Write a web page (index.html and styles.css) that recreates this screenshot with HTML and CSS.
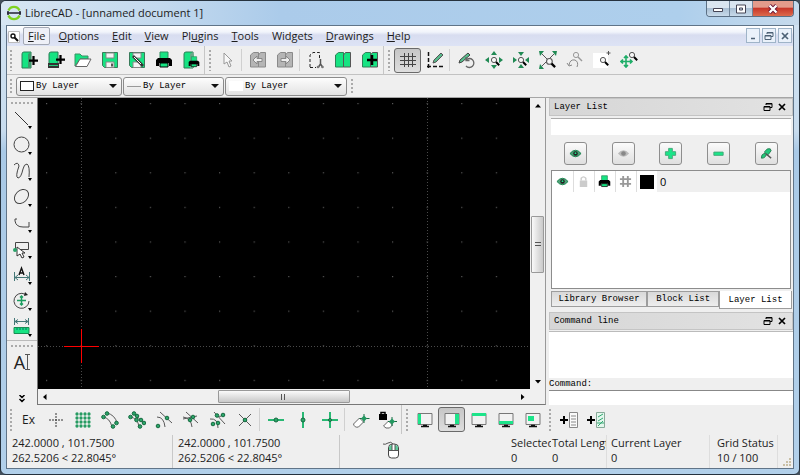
FILE: index.html
```html
<!DOCTYPE html>
<html lang="en">
<head>
<meta charset="utf-8">
<title>LibreCAD - [unnamed document 1]</title>
<link rel="stylesheet" href="styles.css">
</head>
<body>
<svg class="defs" aria-hidden="true">
  <defs>
    <symbol id="plus" viewBox="0 0 8 8"><path d="M3 0h2v3h3v2H5v3H3V5H0V3h3z" fill="#000"/></symbol>
    <symbol id="lens" viewBox="0 0 10 10"><circle cx="4" cy="4" r="2.6" fill="#f6f6f6" stroke="#555"/><path d="M6 6l3.2 3.2" stroke="#000" stroke-width="2"/></symbol>
    <symbol id="printer" viewBox="0 0 18 18"><path d="M5 1h8v7H5z" fill="#16e382" stroke="#2a8f5c"/><path d="M3 7h12l2 2v6h-3v-3H4v3H1V9z" fill="#000"/><path d="M5 12h8v4H5z" fill="#16e382" stroke="#000"/></symbol>
    <symbol id="eye" viewBox="0 0 14 10"><path d="M1 5q6-7 12 0q-6 7-12 0z" fill="currentColor" opacity=".75"/><path d="M1 5q6-7 12 0q-6 7-12 0z" fill="none" stroke="currentColor"/><circle cx="7" cy="5" r="2.4" fill="#222"/><circle cx="7" cy="4.600" r="1" fill="#19e488"/></symbol>
    <symbol id="monitor" viewBox="0 0 18 18"><path d="M2 2.500h14v11H2z" fill="#f2f2f2" stroke="#777"/><path d="M5 15.500h8M7 14.500h4" stroke="#111" stroke-width="1.500"/></symbol>
    <symbol id="restore" viewBox="0 0 10 10"><path d="M3 3V1.500h6v4H7M3 2h6M1 4.500h6v4H1zM1 5h6" fill="none" stroke="currentColor"/></symbol>
    <symbol id="cross" viewBox="0 0 10 10"><path d="M2 2l6 6M8 2l-6 6" fill="none" stroke="currentColor" stroke-width="1.700"/></symbol>
    <symbol id="more" viewBox="0 0 4 3"><path d="M0 0h4L2 3z"/></symbol>
  </defs>
</svg>

<div class="window">
  <header class="titlebar">
    <svg class="logo" viewBox="0 0 16 16"><path d="M2.500 5.500a6 6 0 0 1 11 0M2.500 10.500a6 6 0 0 0 11 0" fill="none" stroke="#7ed321" stroke-width="2.400"/><path d="M1 8h14M2 6v4M14 6v4" fill="none" stroke="#223" stroke-width="1.500"/></svg>
    <h1>LibreCAD - [unnamed document 1]</h1>
    <div class="winbuttons">
      <button aria-label="Minimize"><svg width="12" height="8" viewBox="0 0 12 8"><path d="M1.500 3.500h9v3h-9z" fill="#fff" stroke="#445"/></svg></button>
      <button aria-label="Maximize"><svg width="12" height="10" viewBox="0 0 12 10"><path d="M1.500 1h9v8h-9z" fill="#fff" stroke="#445"/><path d="M4.500 4h3v2h-3z" fill="#cde" stroke="#445"/></svg></button>
      <button class="close" aria-label="Close"><svg width="12" height="10" viewBox="0 0 12 10"><path d="M2.500 1.500l7 7M9.500 1.500l-7 7" stroke="#613" stroke-width="4"/><path d="M2.500 1.500l7 7M9.500 1.500l-7 7" stroke="#fff" stroke-width="2.400"/></svg></button>
    </div>
  </header>

  <div class="client">
    <nav class="menubar">
      <svg class="docicon" viewBox="0 0 12 12"><path d="M.5.5h11v11H.5z" fill="#fff" stroke="#bbb"/><circle cx="5" cy="5" r="2" fill="#fff" stroke="#111" stroke-width="1.400"/><path d="M6.500 6.500l3.500 3.500" stroke="#111" stroke-width="2"/></svg>
      <button class="active"><u>F</u>ile</button>
      <button><u>O</u>ptions</button>
      <button><u>E</u>dit</button>
      <button><u>V</u>iew</button>
      <button>Pl<u>u</u>gins</button>
      <button><u>T</u>ools</button>
      <button>Widgets</button>
      <button><u>D</u>rawings</button>
      <button><u>H</u>elp</button>
      <div class="mdi">
        <button aria-label="Minimize document"><svg viewBox="0 0 10 10"><path d="M3 7.500h4" stroke="currentColor" stroke-width="1.500"/></svg></button>
        <button aria-label="Restore document"><svg><use href="#restore"/></svg></button>
        <button aria-label="Close document"><svg><use href="#cross"/></svg></button>
      </div>
    </nav>

    <div class="toolbar">
      <i class="grip"></i>
      <button aria-label="New"><svg viewBox="0 0 18 18"><path d="M2 17V3q0-2 2-2h7v16z" fill="#16e382" stroke="#2a7d55"/><path d="M11 17H8V3l3-2" fill="#3d9b6c"/><use href="#plus" x="9" y="5" width="9" height="9"/></svg></button>
      <button aria-label="New from template"><svg viewBox="0 0 18 18"><path d="M2 13V3q0-2 2-2h7v12z" fill="#16e382" stroke="#2a7d55"/><path d="M1 12h11v5H1z" fill="#333"/><path d="M2 14.500h9" stroke="#24c979"/><use href="#plus" x="9" y="4" width="9" height="9"/></svg></button>
      <button aria-label="Open"><svg viewBox="0 0 18 18"><path d="M1 15V3h5l2 2h6v3H6z" fill="#16e382" stroke="#3a9164"/><path d="M1.500 15.500L6 8h11l-4 7.500z" fill="#fff" stroke="#666"/></svg></button>
      <button aria-label="Save"><svg viewBox="0 0 18 18"><path d="M1.500 1.500h15v15h-13l-2-2z" fill="#16e382" stroke="#3a7a5a"/><path d="M5 2h8v5H5zM5 11h8v5.500H5z" fill="#f4f4f4" stroke="#888"/><path d="M10 12.500h2v3h-2z" fill="#555"/></svg></button>
      <button aria-label="Save as"><svg viewBox="0 0 18 18"><path d="M1.500 1.500h15v15h-13l-2-2z" fill="#16e382" stroke="#3a7a5a"/><path d="M5 2h8v5H5zM5 11h8v5.500H5z" fill="#f4f4f4" stroke="#888"/><path d="M5 5l10 10" stroke="#333" stroke-width="2.600"/><path d="M6 6l7 7" stroke="#fff"/></svg></button>
      <button aria-label="Print"><svg><use href="#printer"/></svg></button>
      <button aria-label="Print preview"><svg viewBox="0 0 18 18"><path d="M2 17V3q0-2 2-2h7v16z" fill="#16e382" stroke="#2a7d55"/><path d="M8 3l3-2 1 4v12H8z" fill="#68a989"/><use href="#printer" x="6" y="5" width="12" height="12"/></svg></button>
      <i class="sep"></i><i class="grip tight"></i>
      <button aria-label="Select"><svg viewBox="0 0 18 18"><path d="M6 2v11l3-2 2 5 2-1-2-5h3z" fill="#f8f8f8" stroke="#999"/></svg></button>
      <i class="rule"></i>
      <button aria-label="Undo"><svg viewBox="0 0 18 18"><path d="M1.500 16V4l3-2.500h5V16zM9.500 4l2-2.500h5V16h-7z" fill="#b5b5b5" stroke="#8a8a8a"/><path d="M4 9l4-4v2.500h5v3H8V13z" fill="#eee" stroke="#888"/></svg></button>
      <button aria-label="Redo"><svg viewBox="0 0 18 18"><path d="M1.500 16V4l3-2.500h5V16zM9.500 4l2-2.500h5V16h-7z" fill="#b5b5b5" stroke="#8a8a8a"/><path d="M14 9l-4-4v2.500H5v3h5V13z" fill="#eee" stroke="#888"/></svg></button>
      <i class="rule"></i>
      <button aria-label="Cut"><svg viewBox="0 0 18 18"><path d="M3 16V4l3-2.500h6.500V8M3 16.500h6" fill="none" stroke="#222" stroke-dasharray="3 2"/><path d="M13.500 8v5l-2 3M13.500 13l2 3" fill="none" stroke="#555" stroke-width="1.500"/><circle cx="11" cy="16" r="1.300" fill="#777"/><circle cx="15.500" cy="16" r="1.300" fill="#777"/></svg></button>
      <button aria-label="Copy"><svg viewBox="0 0 18 18"><path d="M1.500 16V4l3-2.500h5V16z" fill="#16e382" stroke="#2f8158"/><path d="M9.500 16V4l2-2.500h5V16z" fill="#16e382" stroke="#555"/></svg></button>
      <button aria-label="Paste"><svg viewBox="0 0 18 18"><path d="M1.500 16V4l3-2.500h5V16z" fill="#16e382" stroke="#2f8158"/><path d="M9.500 16V4l2-2.500h5V16z" fill="#16e382" stroke="#555"/><use href="#plus" x="6" y="4" width="10" height="10"/></svg></button>
      <i class="sep"></i><i class="grip wide"></i>
      <button class="pressed" aria-label="Grid"><svg viewBox="0 0 18 18"><path d="M5.500 2v14M9.500 2v14M13.500 2v14M1 5.500h16M1 9.500h16M1 13.500h16" stroke="#444"/></svg></button>
      <button aria-label="Draft"><svg viewBox="0 0 18 18"><path d="M2.500 1v16M1 15.500h16" stroke="#111" stroke-width="1.500" stroke-dasharray="4 2"/><path d="M7 12l1-3 7-7 2 2-7 7z" fill="#58b98a" stroke="#555"/></svg></button>
      <i class="rule wide"></i>
      <button aria-label="Redraw"><svg viewBox="0 0 18 18"><path d="M1 12l1-3 8-7 2 2-8 7z" fill="#58c08e" stroke="#444"/><path d="M8 9a4.500 4.500 0 1 1 0 6M8 6v3.500h3.500" fill="none" stroke="#666" stroke-width="1.300"/></svg></button>
      <button aria-label="Zoom in"><svg viewBox="0 0 18 18"><path d="M9 0l3 4H6zM9 18l3-4H6zM0 9l4-3v6zM18 9l-4-3v6z" fill="#218a54"/><use href="#lens" x="5" y="5" width="10" height="10"/></svg></button>
      <button aria-label="Zoom out"><svg viewBox="0 0 18 18"><path d="M9 5l3-4H6zM9 13l3 4H6zM5 9L1 6v6zM13 9l4-3v6z" fill="#218a54"/><use href="#lens" x="5" y="5" width="10" height="10"/></svg></button>
      <button aria-label="Auto zoom"><svg viewBox="0 0 18 18"><path d="M3 3l12 12M15 3L3 15" stroke="#555"/><path d="M0 0h5L1 5zM18 0h-5l4 5zM0 18h5l-4-5z" fill="#218a54"/><use href="#lens" x="6" y="6" width="11" height="11"/></svg></button>
      <button aria-label="Previous view"><svg viewBox="0 0 18 18"><circle cx="10" cy="4" r="2.600" fill="#eee" stroke="#999"/><path d="M12 6l4 4" stroke="#999" stroke-width="1.500"/><path d="M3 14q1-6 6-5q4 2 2 7M1 12l2 3 3-1" fill="none" stroke="#888"/></svg></button>
      <button aria-label="Window zoom"><svg viewBox="0 0 18 18"><path d="M0 2h15v15H0z" fill="#fff"/><use href="#lens" x="6" y="5" width="10" height="10"/><path d="M15.500 0v4M13.500 2h4" stroke="#555"/></svg></button>
      <button aria-label="Zoom pan"><svg viewBox="0 0 18 18"><path d="M6 5v11M1 10.500h11M4 7l2-2 2 2M4 14l2 2 2-2M3 8.500l-2 2 2 2M10 8.500l2 2-2 2" fill="none" stroke="#1fae68" stroke-width="1.600"/><use href="#lens" x="8" y="0" width="10" height="10"/></svg></button>
    </div>

    <div class="toolbar pens">
      <i class="grip"></i>
      <label class="combo pen-color"><i class="swatch"></i><select aria-label="Color"><option>By Layer</option></select></label>
      <label class="combo pen-width"><i class="swatch line"></i><select aria-label="Line width"><option>By Layer</option></select></label>
      <label class="combo pen-type"><i class="swatch blank"></i><select aria-label="Line type"><option>By Layer</option></select></label>
      <i class="grip tight"></i>
    </div>

    <main class="work">
      <aside class="tools">
        <i class="grip-h"></i>
        <button aria-label="Line"><svg viewBox="0 0 20 20"><path d="M3 3l13 13" stroke="#333"/><use href="#more" x="16" y="17" width="4" height="3"/></svg></button>
        <button aria-label="Circle"><svg viewBox="0 0 20 20"><circle cx="9.500" cy="9.500" r="7.500" fill="none" stroke="#444"/><use href="#more" x="16" y="17" width="4" height="3"/></svg></button>
        <button aria-label="Curve"><svg viewBox="0 0 20 20"><path d="M2 4q4-4 5 1q-4 11-1 12q3 0 5-9q1-5 4-5q3 2 2 13" fill="none" stroke="#444"/><use href="#more" x="16" y="17" width="4" height="3"/></svg></button>
        <button aria-label="Ellipse"><svg viewBox="0 0 20 20"><ellipse cx="9.500" cy="9.500" rx="8" ry="6" transform="rotate(-45 9.500 9.500)" fill="none" stroke="#444"/><use href="#more" x="16" y="17" width="4" height="3"/></svg></button>
        <button aria-label="Polyline"><svg viewBox="0 0 20 20"><path d="M5 6q-3-1-2 2q1 6 8 6h6V9" fill="none" stroke="#444"/><use href="#more" x="16" y="17" width="4" height="3"/></svg></button>
        <button aria-label="Select"><svg viewBox="0 0 20 20"><path d="M3.500 3.500h13v7h-13z" fill="none" stroke="#444"/><path d="M5 8v9l3-2 2 4 2-1-2-4h3z" fill="#fff" stroke="#333"/><circle cx="3" cy="11" r="2" fill="#2aa36a"/><use href="#more" x="16" y="17" width="4" height="3"/></svg></button>
        <button aria-label="Dimension"><svg viewBox="0 0 20 20"><path d="M2.500 7v9M17.500 7v9M3 12.500h14M6 10l-3 2.500L6 15M14 10l3 2.500-3 2.500" fill="none" stroke="#477"/><path d="M7 10l2.500-7L12 10M8 8h3" fill="none" stroke="#111" stroke-width="1.400"/><use href="#more" x="16" y="17" width="4" height="3"/></svg></button>
        <button aria-label="Modify"><svg viewBox="0 0 20 20"><path d="M17 10a7.500 7.500 0 1 1-4-6.800" fill="none" stroke="#444"/><path d="M13 1l3 3-4 1z" fill="#222"/><path d="M9.500 5v9M5 9.500h9M8 6.500l1.500-1.500L11 6.500M8 12.500L9.500 14l1.500-1.500" fill="none" stroke="#1c9d60" stroke-width="1.500"/><use href="#more" x="16" y="17" width="4" height="3"/></svg></button>
        <button aria-label="Measure"><svg viewBox="0 0 20 20"><path d="M2.500 1v7M16.500 1v7M3 4.500h13M6 2.500l-3 2 3 2M13 2.500l3 2-3 2" fill="none" stroke="#477"/><path d="M2 10.500h15v6H2z" fill="#16e382" stroke="#188d53"/><path d="M5 11v2M8 11v2M11 11v2M14 11v2" stroke="#166"/><use href="#more" x="16" y="17" width="4" height="3"/></svg></button>
        <i class="split"></i>
        <i class="grip-h"></i>
        <button class="text-tool" aria-label="Text">A<svg viewBox="0 0 5 16"><path d="M0 .5h5M2.500 1v14M0 15.500h5" stroke="#555"/></svg></button>
        <button class="chevron" aria-label="More tools"><svg viewBox="0 0 8 8"><path d="M1.500 0L4 2.500 6.500 0M1.500 4L4 6.500 6.500 4" fill="none" stroke="#000" stroke-width="1.500"/></svg></button>
      </aside>

      <section class="drawing">
        <svg class="canvas" role="img" aria-label="Drawing area">
          <defs><pattern id="dots" x="8" y="5" width="34.600" height="34.600" patternUnits="userSpaceOnUse"><rect width="1.200" height="1.200" fill="#585858"/></pattern></defs>
          <rect width="100%" height="100%" fill="#000"/>
          <rect width="100%" height="100%" fill="url(#dots)"/>
          <path d="M43.500 0v2000M389.500 0v2000M0 248.500h3000" stroke="#4a4a4a" stroke-dasharray="1 2"/>
          <path d="M43 231h1v34h-1zM26 248h35v1H26z" fill="#ff0000"/>
        </svg>
        <div class="vscroll">
          <svg viewBox="0 0 6 4"><path d="M0 3.500L3 0l3 3.500z"/></svg>
          <i class="thumb"><b></b></i>
          <svg viewBox="0 0 6 4"><path d="M0 0h6L3 3.500z"/></svg>
        </div>
        <div class="hscroll">
          <svg viewBox="0 0 4 6"><path d="M3.500 0v6L0 3z"/></svg>
          <i class="thumb"><b></b></i>
          <svg viewBox="0 0 4 6"><path d="M0 0v6l3.500-3z"/></svg>
        </div>
        <i class="scroll-corner"></i>
      </section>

      <aside class="docks">
        <section class="layers">
          <header class="dockhead"><h2>Layer List</h2><button aria-label="Float layer list"><svg><use href="#restore"/></svg></button><button aria-label="Close layer list"><svg><use href="#cross"/></svg></button></header>
          <input class="filter" type="text" aria-label="Filter layers">
          <div class="layerbuttons">
            <button class="on" aria-label="Show all"><svg viewBox="0 0 14 14"><use href="#eye" y="2" width="14" height="10"/></svg></button>
            <button class="off" aria-label="Hide all"><svg viewBox="0 0 14 14"><path d="M1 7q6-7 12 0q-6 7-12 0z" fill="#bbb"/><circle cx="7" cy="7" r="2.500" fill="#888"/></svg></button>
            <button aria-label="Add layer"><svg viewBox="0 0 14 14"><path d="M5 1.500h4V5h3.500v4H9v3.500H5V9H1.500V5H5z" fill="#1be589" stroke="#43a877"/></svg></button>
            <button aria-label="Remove layer"><svg viewBox="0 0 14 14"><path d="M2 5.500h10v3.500H2z" fill="#1be589" stroke="#43a877"/></svg></button>
            <button aria-label="Edit layer"><svg viewBox="0 0 14 14"><path d="M1.500 12q0-5 4-5l-.5-2 3-3h3l1 2-3 4-3 1q0 3-4.500 3z" fill="#22c97b" stroke="#287a53"/><path d="M6 7l6 5" stroke="#555" stroke-width="1.500"/></svg></button>
          </div>
          <div class="layerlist">
            <table><tr>
              <td class="on"><svg viewBox="0 0 14 14"><use href="#eye" y="2" width="14" height="10"/></svg></td>
              <td><svg viewBox="0 0 14 14"><path d="M3 6h8v7H3z" fill="#ccc"/><path d="M4.500 6V3.500q2.500-3 5 0V6" fill="none" stroke="#ccc" stroke-width="1.500"/></svg></td>
              <td><svg><use href="#printer"/></svg></td>
              <td><svg viewBox="0 0 14 14"><path d="M4.500 1v12M9.500 1v12M1 4.500h12M1 9.500h12" stroke="#999" stroke-width="2"/></svg></td>
              <td><i class="black"></i></td>
              <td class="name">0</td>
            </tr></table>
          </div>
          <div class="tabs"><button>Library Browser</button><button>Block List</button><button class="current">Layer List</button></div>
        </section>
        <section class="command">
          <header class="dockhead"><h2>Command line</h2><button aria-label="Float command line"><svg><use href="#restore"/></svg></button><button aria-label="Close command line"><svg><use href="#cross"/></svg></button></header>
          <textarea aria-label="Command history" readonly></textarea>
          <label for="cmd">Command:</label>
          <input id="cmd" type="text">
        </section>
      </aside>
    </main>

    <div class="toolbar snaps">
      <i class="grip"></i>
      <button class="ex">Ex</button>
      <button aria-label="Free snap"><svg viewBox="0 0 18 18"><path d="M9 2v14M2 9h14" stroke="#333" stroke-dasharray="2 1"/></svg></button>
      <button aria-label="Snap on grid"><svg viewBox="0 0 18 18"><path d="M3 3h.01M7 3h.01M11 3h.01M15 3h.01M3 7h.01M7 7h.01M11 7h.01M15 7h.01M3 11h.01M7 11h.01M11 11h.01M15 11h.01M3 15h.01M7 15h.01M11 15h.01M15 15h.01" stroke="#279b62" stroke-width="3.300" stroke-linecap="round"/></svg></button>
      <button aria-label="Snap on endpoints"><svg class="pts" viewBox="0 0 18 18"><path d="M2 6q7 1 9 10M6 2q8 2 10 10"/><circle cx="2.500" cy="6" r="1.800"/><circle cx="6" cy="2.500" r="1.800"/><circle cx="12" cy="15.500" r="1.800"/><circle cx="15.500" cy="12" r="1.800"/></svg></button>
      <button aria-label="Snap on entity"><svg class="pts" viewBox="0 0 18 18"><path d="M2 6q8 1 9 10M5 2l11 10"/><circle cx="2.500" cy="6" r="1.800"/><circle cx="6" cy="2.500" r="1.800"/><circle cx="12" cy="15.500" r="1.800"/><circle cx="16" cy="12" r="1.800"/><circle cx="8.500" cy="9" r="1.800"/><circle cx="13" cy="9" r="1.800"/><circle cx="9" cy="5" r="1.800"/></svg></button>
      <button aria-label="Snap center"><svg class="pts" viewBox="0 0 18 18"><path d="M2 6q7 0 8 10M5 1l12 11"/><circle cx="3" cy="15" r="1.800"/><circle cx="12" cy="7" r="1.800"/></svg></button>
      <button aria-label="Snap middle"><svg class="pts" viewBox="0 0 18 18"><path d="M1 6q8 1 9 10M4 1l12 11M1 8l14-3"/><circle cx="11" cy="6" r="1.800"/><circle cx="8" cy="9" r="1.800"/></svg></button>
      <button aria-label="Snap distance"><svg class="pts" viewBox="0 0 18 18"><path d="M1 8q8-1 8 9M5 1l11 12M2 14l3-1M10 6l6-3"/><circle cx="8" cy="4.500" r="1.800"/><circle cx="14" cy="4" r="1.800"/><circle cx="4" cy="13" r="1.800"/><circle cx="9" cy="12" r="1.800"/></svg></button>
      <button aria-label="Snap intersection"><svg class="pts" viewBox="0 0 18 18"><path d="M3 3l12 12M15 3L3 15"/><circle cx="9" cy="9" r="1.800"/></svg></button>
      <i class="rule"></i>
      <button aria-label="Restrict horizontal"><svg class="pts" viewBox="0 0 18 18"><path class="g" d="M1 9h16"/><circle cx="9" cy="9" r="2"/></svg></button>
      <button aria-label="Restrict vertical"><svg class="pts" viewBox="0 0 18 18"><path class="g" d="M9 1v16"/><circle cx="9" cy="9" r="2"/></svg></button>
      <button aria-label="Restrict orthogonal"><svg class="pts" viewBox="0 0 18 18"><path class="g" d="M1 9h16M9 1v16"/><circle cx="9" cy="9" r="1.500"/></svg></button>
      <i class="rule"></i>
      <button aria-label="Set relative zero"><svg viewBox="0 0 18 18"><path d="M1.500 13l6-6 4 4-5 5q-4 1-5-3z" fill="#fff" stroke="#666"/><path d="M12 3v9M7.500 7.500h10" stroke="#176b42"/><path d="M12 4.500l3 3-3 3-3-3z" fill="#239860"/></svg></button>
      <button aria-label="Lock relative zero"><svg viewBox="0 0 18 18"><path d="M4.500 15l5-5 4 4-3 3q-4 1-6-2z" fill="#fff" stroke="#666"/><path d="M13 6v9M9 10.500h9" stroke="#176b42"/><path d="M13 7.500l3 3-3 3-3-3z" fill="#239860"/><path d="M0 3h8v6H0z"/><path d="M2 4V1.500h4V4" fill="none" stroke="#000" stroke-width="1.500"/></svg></button>
      <i class="sep"></i><i class="grip mid"></i>
      <button aria-label="Left dock"><svg viewBox="0 0 18 18"><use href="#monitor"/><path d="M2 3h3v10H2z" fill="#1de48a"/></svg></button>
      <button class="pressed" aria-label="Right dock"><svg viewBox="0 0 18 18"><use href="#monitor"/><path d="M12 3h4v10h-4z" fill="#1de48a"/></svg></button>
      <button aria-label="Top dock"><svg viewBox="0 0 18 18"><use href="#monitor"/><path d="M2 2h14v3H2z" fill="#1de48a"/></svg></button>
      <button aria-label="Bottom dock"><svg viewBox="0 0 18 18"><use href="#monitor"/><path d="M2 10h14v3H2z" fill="#1de48a"/></svg></button>
      <button aria-label="Floating dock"><svg viewBox="0 0 18 18"><use href="#monitor"/><path d="M4 5h6v5H4z" fill="#1de48a"/></svg></button>
      <i class="grip mid last"></i>
      <button aria-label="Add menu"><svg viewBox="0 0 18 18"><use href="#plus" x="0" y="5" width="8" height="8"/><path d="M9.500 1.500h8v15h-8z" fill="#fafafa" stroke="#888"/><path d="M11 5h5M11 8h5M11 11h5M11 14h5" stroke="#888"/></svg></button>
      <button aria-label="Add toolbar"><svg viewBox="0 0 18 18"><use href="#plus" x="0" y="5" width="8" height="8"/><path d="M9.500 1.500h8v15h-8z" fill="#e4f7ed" stroke="#8a9"/><path d="M11 6l5-3M11 10l5-3M11 15l5-5M10 12h7" stroke="#33a873"/></svg></button>
    </div>

    <footer class="status">
      <div class="coords">242.0000 , 101.7500<br>262.5206 &lt; 22.8045°</div>
      <div class="coords">242.0000 , 101.7500<br>262.5206 &lt; 22.8045°</div>
      <div class="mouse"><svg viewBox="0 0 18 20"><path d="M6.500 8q0-4 4-4h2q4 0 4 4v7q0 3-3 3h-4q-3 0-3-3z" fill="#fff" stroke="#444"/><path d="M7 10V8q0-3 3-3v5zM13 10V5q3 0 3 3v2z" fill="#5fc99a"/><path d="M6.500 10.500h10M10 4v6M13 4v6M11 4Q9 1 6 3T1 4" fill="none" stroke="#555"/></svg></div>
      <div class="selected">Selected<br>0</div>
      <div class="length">Total Length<br>0</div>
      <div class="current-layer">Current Layer<br>0</div>
      <div class="grid-status">Grid Status<br>10 / 100</div>
      <div class="corner"><svg viewBox="0 0 9 9"><path d="M7 1h2M7 4h2M7 7h2M4 4h2M4 7h2M1 7h2" stroke="#c9bfa5" stroke-width="2"/></svg></div>
    </footer>
  </div>
</div>
</body>
</html>
```
FILE: styles.css
```css
* { box-sizing: border-box; }

body {
  margin: 0;
  background: #44505c;
  color: #1c1c1c;
  font: 11px/15px "Open Sans", "Noto Sans", sans-serif;
}

button, input, select, textarea {
  margin: 0;
  padding: 0;
  border: 0;
  border-radius: 0;
  background: none;
  color: inherit;
  font: inherit;
  outline: 0;
}

i { font-style: normal; }
svg { display: block; }
.defs { position: absolute; width: 0; height: 0; }

/* Window frame */
.window {
  display: flex;
  flex-direction: column;
  height: 100vh;
  border: 1px solid #26323e;
  border-radius: 6px;
  background: linear-gradient(#d2e3f2 0, #c8dcee 130px, #a9c9e6 150px, #b2d0ea 100%);
  overflow: hidden;
}

.titlebar {
  display: flex;
  height: 24px;
  padding-left: 5px;
  background: linear-gradient(90deg, #d7e6f3 0, #c3d9ee 20%, #abcbea 35%, #aecfec 85%, #c6daec 100%);
}

.logo { width: 16px; height: 16px; margin-top: 4px; }

h1 {
  flex: 1;
  margin: 0 0 0 3px;
  font-size: 11px;
  font-weight: 400;
  line-height: 24px;
}

.winbuttons {
  display: flex;
  height: 16px;
  margin-right: 5px;
  border: 1px solid #5b6f84;
  border-top: 0;
  border-radius: 0 0 4px 4px;
  overflow: hidden;
}

.winbuttons button {
  display: grid;
  place-items: center;
  width: 23px;
  border-right: 1px solid #71869b;
  background: linear-gradient(#d9e5f0 0 45%, #a9bfd4 50%, #c8daea);
}

.winbuttons .close {
  width: 40px;
  border: 0;
  background: linear-gradient(#e39b8b 0 40%, #c8382a 50%, #dd6a4c);
}

.client {
  display: flex;
  flex: 1;
  flex-direction: column;
  min-height: 0;
  margin: 0 5px 5px;
  border: 1px solid #607488;
  background: #efefef;
}

/* Menu bar */
.menubar {
  display: flex;
  flex: none;
  gap: 3px;
  height: 20px;
  padding: 1px 1px 0 0;
  background: linear-gradient(#fff 0, #f1f4fb 30%, #d8ddf0 45%, #dde3f5 100%);
}

.docicon { width: 12px; height: 12px; margin: 4px 0 0 1px; }

.menubar > button {
  height: 18px;
  padding: 0 4px;
  border: 1px solid transparent;
  line-height: 16px;
}

.menubar > .active {
  border-color: #a3a8b4;
  border-radius: 2px;
  background: #eef0f7;
}

.mdi { display: flex; gap: 2px; margin: 1px 0 0 auto; }

.mdi button {
  display: grid;
  place-items: center;
  width: 14px;
  height: 15px;
  border: 1px solid #9fb4c8;
  background: #eaf1fa;
  color: #4d6175;
}

.mdi svg { width: 10px; height: 10px; }

/* Toolbars */
.toolbar {
  display: flex;
  flex: none;
  align-items: center;
  height: 29px;
  border-bottom: 1px solid #c2c2c2;
}

.toolbar button {
  display: grid;
  flex: none;
  place-items: center;
  width: 27px;
  height: 25px;
}

.toolbar button svg { width: 18px; height: 18px; }

.toolbar .pressed {
  border: 1px solid #6a6a6a;
  border-radius: 3px;
  background: linear-gradient(#c6c6c6, #dedede);
}

.grip {
  flex: none;
  align-self: stretch;
  width: 8px;
  margin: 3px 0;
  background: radial-gradient(circle, #aaa 1px, transparent 1px) 2px 0 / 4px 4px repeat-y;
}

.grip.tight { width: 7px; }
.grip.mid { width: 8px; }
.grip.wide, .grip.last { width: 9px; }

.sep, .rule {
  flex: none;
  align-self: stretch;
  width: 2px;
  border-left: 1px solid #c6c6c6;
}

.rule { width: 4px; margin: 3px 0; border-left-color: transparent; background: linear-gradient(#d0d0d0, #d0d0d0) 0 0 / 1px 100% no-repeat; }
.rule.wide { width: 5px; }

.pens { gap: 1px; height: 23px; border-bottom-color: #a6a6a6; }

.combo {
  display: grid;
  align-items: center;
  height: 19px;
  border: 1px solid #8b8b8b;
  border-radius: 3px;
  background: linear-gradient(#fdfdfd, #e2e2e2);
}

.combo > * { grid-area: 1 / 1; }

.combo::after {
  grid-area: 1 / 1;
  justify-self: end;
  margin-right: 4px;
  border: 4px solid transparent;
  border-top: 4px solid #111;
  border-bottom: 0;
  content: "";
}

.pen-color { width: 106px; }
.pen-width { width: 101px; }
.pen-type { width: 122px; }

.combo select {
  width: 100%;
  height: 17px;
  padding-left: 19px;
  appearance: none;
  color: #000;
  font: 9px/17px "Liberation Mono", monospace;
}

.swatch { width: 14px; height: 10px; margin-left: 3px; border: 1px solid #222; background: #fff; }
.swatch.line { height: 1px; border: 0; background: #999; }
.swatch.blank { border: 0; }

/* Work area */
.work { display: flex; flex: 1; min-height: 0; }

.tools {
  display: flex;
  flex: none;
  flex-direction: column;
  align-items: center;
  width: 31px;
  border-right: 1px solid #777;
}

.tools button { flex: none; height: 26px; }
.tools button svg { width: 20px; height: 20px; }

.grip-h {
  flex: none;
  width: 24px;
  height: 8px;
  background: radial-gradient(circle, #aaa 1px, transparent 1px) 0 3px / 4px 4px repeat-x;
}

.split { flex: none; align-self: stretch; height: 1px; background: #bbb; }

.tools .text-tool {
  display: flex;
  align-items: center;
  color: #222;
  font-size: 18px;
  line-height: 26px;
}

.tools .text-tool svg { width: 5px; height: 16px; }
.tools .chevron { height: 12px; margin-top: auto; }
.tools .chevron svg { width: 8px; height: 8px; }

.drawing {
  display: grid;
  flex: 1;
  grid-template: minmax(0, 1fr) 15px / minmax(0, 1fr) 15px;
  min-width: 0;
  border-right: 1px solid #999;
  border-bottom: 1px solid #777;
}

.canvas { width: 100%; height: 100%; }

.vscroll, .hscroll {
  display: flex;
  align-items: center;
  justify-content: space-between;
  background: #f0f0f0;
}

.scroll-corner { background: #f0f0f0; }
.vscroll { flex-direction: column; padding: 6px 0 5px; }
.vscroll > svg { width: 6px; height: 4px; }
.hscroll { padding: 0 5px; }
.hscroll > svg { width: 4px; height: 6px; }

.thumb { display: grid; place-items: center; border: 1px solid #999; border-radius: 1px; }
.vscroll .thumb { width: 13px; height: 57px; margin: 108px 0 auto; background: linear-gradient(90deg, #fafafa, #c9c9c9); }
.hscroll .thumb { width: 132px; height: 13px; background: linear-gradient(#fafafa, #c9c9c9); }
.thumb b { width: 6px; height: 6px; }
.vscroll b { background: repeating-linear-gradient(#555 0 1px, transparent 1px 3px); }
.hscroll b { background: repeating-linear-gradient(90deg, #555 0 1px, transparent 1px 3px); }

/* Dock panels */
.docks {
  display: flex;
  flex: none;
  flex-direction: column;
  width: 247px;
  padding-left: 3px;
  color: #000;
  font: 9px/12px "Liberation Mono", monospace;
}

.dockhead {
  display: flex;
  flex: none;
  align-items: center;
  height: 18px;
  padding: 0 3px 0 4px;
  border: 1px solid #c4c4c4;
  background: linear-gradient(90deg, #d6d6d6, #e2e2e2);
}

h2 { flex: 1; margin: 0; font: inherit; }
.dockhead button { width: 14px; }
.dockhead svg { width: 10px; height: 10px; margin: auto; }

.layers { display: flex; flex: 1; flex-direction: column; min-height: 0; }

.filter { flex: none; height: 17px; margin: 2px 2px 0; border-top: 1px solid #aaa; background: #fff; }

.layerbuttons { display: flex; flex: none; justify-content: space-around; padding: 7px 3px 5px; }

.layerbuttons button {
  display: grid;
  place-items: center;
  width: 23px;
  height: 23px;
  border: 1px solid #8e8e8e;
  border-radius: 3px;
  background: linear-gradient(#fbfbfb, #dfdfdf);
}

.layerbuttons svg { width: 13px; height: 13px; }
.on { color: #14824b; }

.layerlist { flex: 1; min-height: 0; margin: 0 2px; border: 1px solid #8c8c8c; background: #fff; }

table { width: 100%; border-collapse: collapse; table-layout: fixed; }
td { width: 21px; height: 21px; padding: 0; border-right: 1px solid #ddd; }
td svg { width: 13px; height: 13px; margin: auto; }
td:nth-child(5) { border: 0; }
.name { width: auto; padding-left: 3px; border: 0; background: #efefef; font: 11px/15px "Open Sans", "Noto Sans", sans-serif; }
.black { display: block; width: 14px; height: 14px; margin: auto; background: #000; }

.tabs { display: flex; flex: none; height: 18px; margin: 2px 1px 3px 2px; }

.tabs button {
  flex: 97 0 0;
  height: 16px;
  border: 1px solid #9d9d9d;
  background: linear-gradient(#d9d9d9, #eee);
  white-space: nowrap;
}

.tabs button:nth-child(2) { flex-grow: 72; }
.tabs .current { flex-grow: 73; height: 18px; border-top: 0; background: #fff; }

.command { display: flex; flex: none; flex-direction: column; }
.command textarea { display: block; height: 47px; margin-top: 1px; border-top: 1px solid #bbb; background: #fff; resize: none; }
.command label { height: 12px; }
.command input { height: 15px; border-top: 1px solid #888; background: #fff; }

/* Snap toolbar */
.snaps { border: 0; }
.snaps .ex { font-size: 12px; }
.pts path { fill: none; stroke: #5a5a5a; }
.pts .g { stroke: #28b873; stroke-width: 2; }
.pts circle { fill: #2ba569; stroke: #156a40; }

/* Status bar */
.status { display: flex; flex: none; height: 34px; padding: 1px 0 0 5px; }
.status > div { flex: none; overflow: hidden; white-space: nowrap; }
.status .coords { width: 161px; border-right: 1px solid #c8c8c8; }
.status .coords + .coords { width: 167px; padding-left: 5px; }
.status .mouse { flex: 1; }
.mouse svg { width: 18px; height: 20px; margin: 5px 0 0 42px; }
.status .selected { width: 40px; }
.status .length { width: 56px; padding-left: 1px; border-right: 1px solid #ddd; }
.status .current-layer { width: 103px; padding-left: 4px; border-right: 1px solid #ddd; }
.status .grid-status { width: 68px; padding-left: 7px; border-right: 1px solid #ddd; }
.status .corner { align-self: flex-end; width: 15px; }
.corner svg { width: 9px; height: 9px; margin: 0 0 1px 4px; }
```
